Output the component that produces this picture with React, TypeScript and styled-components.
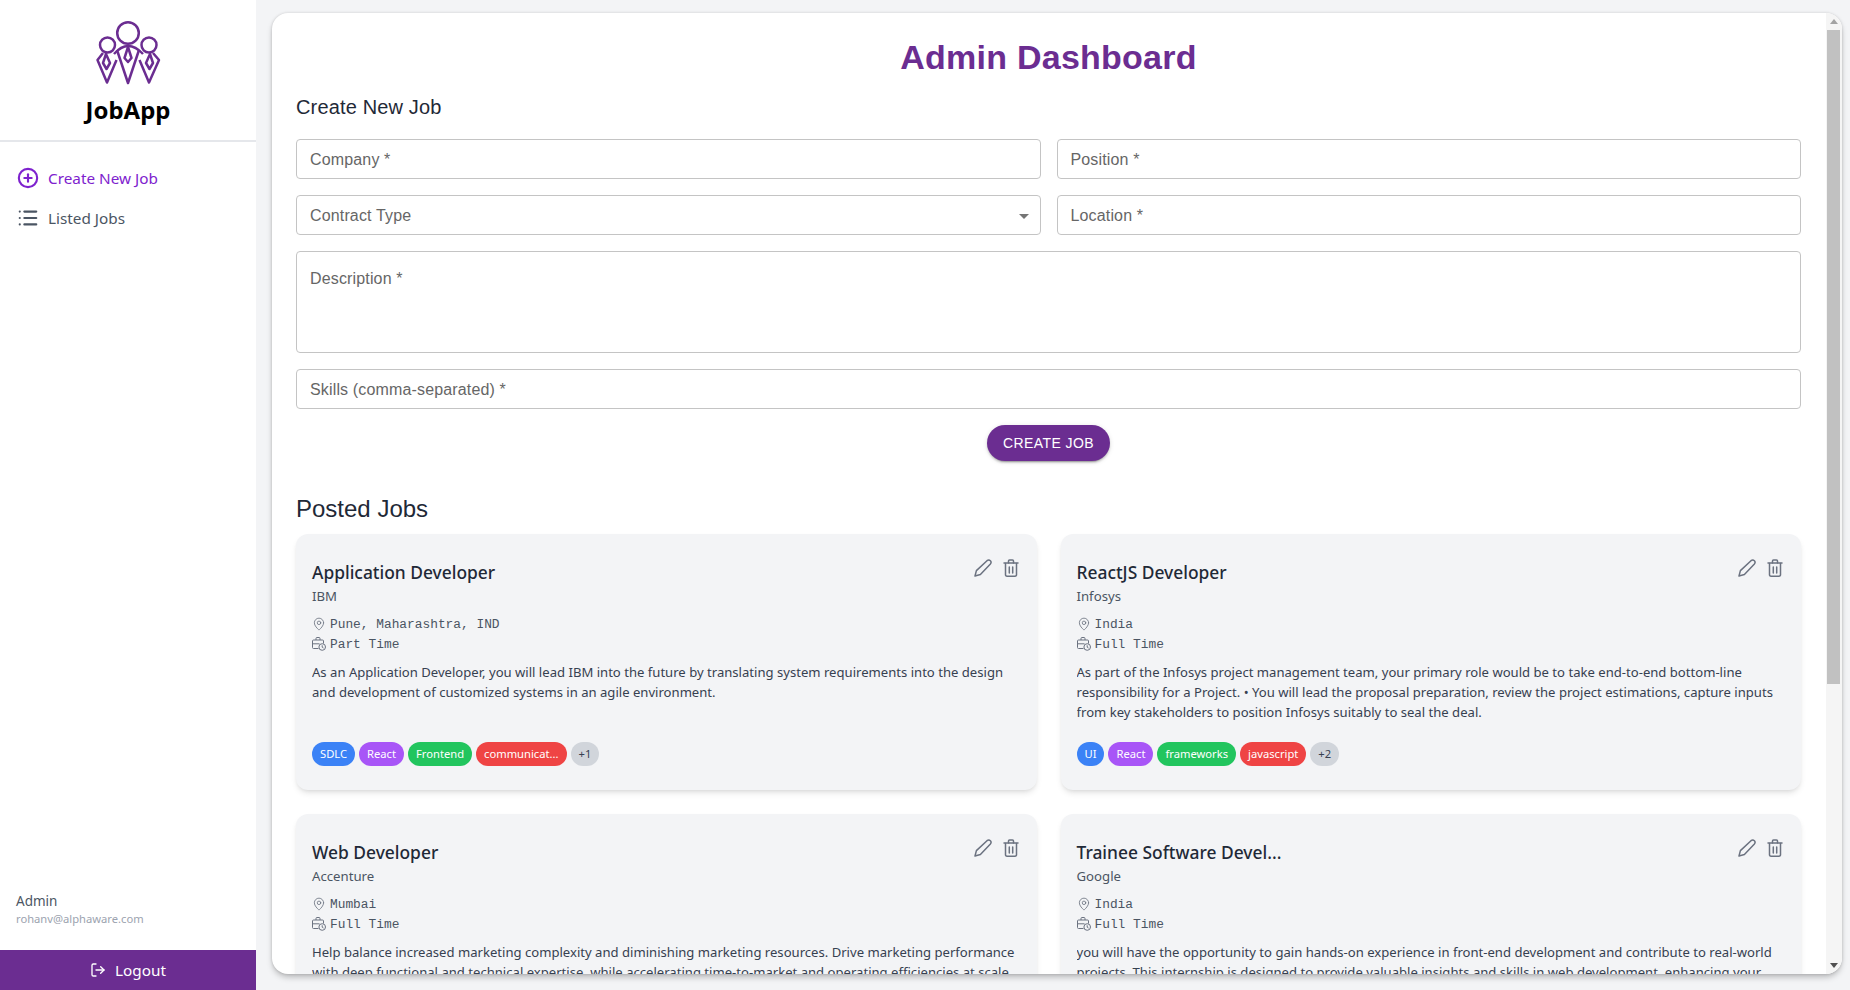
import React from 'react';
import styled, { createGlobalStyle } from 'styled-components';
import { CirclePlus, List, LogOut, MapPin } from 'lucide-react';

const UI_FONT = '"Noto Sans", "Liberation Sans", sans-serif';
const FORM_FONT = '"Liberation Sans", Arial, sans-serif';
const PURPLE = '#6b2d91';

const GlobalStyle = createGlobalStyle`
  * { box-sizing: border-box; }
  html, body { margin: 0; height: 100%; overflow: hidden; }
  body { font-family: ${UI_FONT}; background: #f3f4f6; }
  #root { height: 100%; }
`;

const Layout = styled.div`
  display: flex;
  height: 990px;
  background: #f3f4f6;
`;

const Sidebar = styled.aside`
  width: 256px;
  flex: none;
  display: flex;
  flex-direction: column;
  background: #fff;
`;

const Brand = styled.div`
  height: 142px;
  padding-top: 18px;
  display: flex;
  flex-direction: column;
  align-items: center;
  border-bottom: 2px solid #e5e7eb;
`;

const BrandName = styled.div`
  font-size: 24px;
  line-height: 32px;
  margin-top: 6px;
  font-weight: 700;
  color: #000;
`;

const Nav = styled.nav`
  display: flex;
  flex-direction: column;
  gap: 8px;
  padding: 20px 17px 0;
  flex: 1;
`;

const NavItem = styled.a<{ $active?: boolean }>`
  display: flex;
  align-items: center;
  gap: 9px;
  height: 32px;
  font-size: 15.3px;
  color: ${(p) => (p.$active ? '#7e22ce' : '#4b5563')};
`;

const UserBox = styled.div`
  padding: 0 16px 23px;
`;

const UserName = styled.div`
  font-size: 13.5px;
  line-height: 20px;
  color: #4b5563;
`;

const UserEmail = styled.div`
  font-size: 11.2px;
  line-height: 16px;
  color: #9ca3af;
`;

const LogoutButton = styled.button`
  height: 40px;
  border: 0;
  display: flex;
  align-items: center;
  justify-content: center;
  gap: 9px;
  background: ${PURPLE};
  color: #fff;
  font-family: ${UI_FONT};
  font-size: 15.3px;
`;

const Panel = styled.main`
  width: 1570px;
  height: 961px;
  margin: 13px 0 0 16px;
  display: flex;
  background: #fff;
  border-radius: 16px;
  overflow: hidden;
  box-shadow: 0 4px 6px -1px rgba(0, 0, 0, 0.25), 0 0 3px rgba(0, 0, 0, 0.15);
`;

const PanelBody = styled.div`
  flex: 1;
  min-width: 0;
  padding: 24px 25px 24px 24px;
  overflow: hidden;
`;

const ScrollBar = styled.div`
  width: 16px;
  flex: none;
  display: flex;
  flex-direction: column;
  background: #f5f5f5;
`;

const ScrollArrow = styled.div`
  height: 17px;
  flex: none;
  display: flex;
  align-items: center;
  justify-content: center;
  padding-right: 1px;
`;

const ScrollThumb = styled.div`
  height: 654px;
  margin: 0 2px 0 1px;
  background: #c1c1c1;
`;

const ScrollSpacer = styled.div`
  flex: 1;
`;

const PageTitle = styled.h1`
  margin: 0;
  font: 700 34px/40px ${FORM_FONT};
  letter-spacing: 0.25px;
  color: ${PURPLE};
  text-align: center;
`;

const SectionTitle = styled.h2`
  margin: 16px 0 0;
  height: 46px;
  font: 400 20px/28px ${FORM_FONT};
  letter-spacing: 0.15px;
  color: #1f2937;
`;

const Form = styled.form`
  display: grid;
  grid-template-columns: 1fr 1fr;
  gap: 16px;
`;

const fieldBase = `
  width: 100%;
  border: 1px solid #c4c4c4;
  border-radius: 4px;
  background: #fff;
  outline: none;
  font: 400 16px ${FORM_FONT};
  letter-spacing: 0.15px;
  color: #666;
  &::placeholder { color: #666; opacity: 1; }
`;

const Field = styled.input<{ $wide?: boolean }>`
  ${fieldBase}
  height: 40px;
  padding: 2px 13px 0;
  ${(p) => (p.$wide ? 'grid-column: 1 / -1;' : '')}
`;

const SelectBox = styled.div`
  ${fieldBase}
  height: 40px;
  padding: 2px 10px 0 13px;
  display: flex;
  align-items: center;
  justify-content: space-between;
`;

const Caret = styled.span`
  width: 0;
  height: 0;
  border-left: 5px solid transparent;
  border-right: 5px solid transparent;
  border-top: 5px solid #757575;
  margin-right: 1px;
`;

const Area = styled.textarea`
  ${fieldBase}
  grid-column: 1 / -1;
  height: 102px;
  padding: 18px 13px;
  resize: none;
`;

const FormActions = styled.div`
  grid-column: 1 / -1;
  display: flex;
  justify-content: center;
`;

const CreateButton = styled.button`
  height: 36px;
  padding: 0 16px;
  border: 0;
  border-radius: 18px;
  background: ${PURPLE};
  color: #fff;
  font: 400 14px ${FORM_FONT};
  letter-spacing: 0.4px;
  box-shadow: 0 3px 1px -2px rgba(0, 0, 0, 0.2), 0 2px 2px rgba(0, 0, 0, 0.14), 0 1px 5px rgba(0, 0, 0, 0.12);
`;

const JobsTitle = styled.h2`
  margin: 28px 0 0;
  height: 45px;
  font: 400 24px/40px ${FORM_FONT};
  color: #1f2937;
`;

const CardGrid = styled.div`
  display: grid;
  grid-template-columns: 1fr 1fr;
  gap: 24px;
`;

const Card = styled.article`
  position: relative;
  height: 256px;
  padding: 24px 16px;
  display: flex;
  flex-direction: column;
  background: #f3f4f6;
  border-radius: 12px;
  box-shadow: 0 4px 6px -1px rgba(0, 0, 0, 0.1), 0 2px 4px -2px rgba(0, 0, 0, 0.1);
`;

const CardActions = styled.div`
  position: absolute;
  top: 25px;
  right: 18px;
  display: flex;
  gap: 11px;
  color: #6b7280;
`;

const JobTitle = styled.h3`
  margin: 0;
  font-size: 17.4px;
  line-height: 28px;
  font-weight: 500;
  color: #1f2937;
`;

const Company = styled.div`
  font-size: 13.2px;
  line-height: 20px;
  color: #4b5563;
`;

const MetaRows = styled.div`
  margin-top: 8px;
`;

const MetaRow = styled.div`
  display: flex;
  align-items: center;
  gap: 4px;
  height: 20px;
  font: 400 12.85px "Liberation Mono", monospace;
  color: #4b5563;
`;

const MetaIcon = styled.span`
  width: 14px;
  flex: none;
  display: flex;
  justify-content: center;
  color: #6b7280;
`;

const Description = styled.p`
  margin: 8px 0 0;
  height: 60px;
  font-size: 13.1px;
  line-height: 20px;
  color: #374151;
  overflow: hidden;
`;

const Pills = styled.div`
  margin-top: auto;
  display: flex;
  gap: 4px;
`;

const TONES: Record<string, string> = {
  blue: 'background: #3b82f6; color: #fff;',
  purple: 'background: #a855f7; color: #fff;',
  green: 'background: #22c55e; color: #fff;',
  red: 'background: #ef4444; color: #fff;',
  gray: 'background: #d1d5db; color: #374151;',
};

const Pill = styled.span<{ $tone: string }>`
  height: 24px;
  padding: 0 8px;
  border-radius: 12px;
  font-size: 11.2px;
  line-height: 24px;
  ${(p) => TONES[p.$tone]}
`;

function Logo() {
  return (
    <svg width="66" height="70" viewBox="95 18 66 70" fill="none" stroke={PURPLE} strokeWidth="2.5" strokeLinejoin="round">
      <circle cx="128" cy="33" r="10.8" />
      <circle cx="107.5" cy="45" r="7.5" />
      <circle cx="149" cy="45" r="7.5" />
      <path d="M114 54 Q128 38 143 54" />
      <path d="M117 50 L128 83 L139 50" />
      <path d="M128 47 L124.5 58 L128 62 L131.5 58 Z" />
      <path d="M103 53 L97.5 60 L107 82.5 L116.5 60" />
      <path d="M153 53 L159 60 L149 82.5 L139.5 60" />
      <path d="M106 54 L103 63 L106.5 69 L110 63 Z" />
      <path d="M150 54 L153 63 L149.5 69 L146 63 Z" />
    </svg>
  );
}

function PencilIcon() {
  return (
    <svg width="18" height="18" viewBox="0 0 18 18" fill="none" stroke="currentColor" strokeWidth="1.5" strokeLinejoin="round">
      <path d="M1 17 L2.4 11.6 L13 1.7 Q14.8 0.3 16.4 1.7 Q17.8 3.3 16.4 5 L6.4 15.6 Z" />
    </svg>
  );
}

function TrashIcon() {
  return (
    <svg width="16" height="18" viewBox="0 0 16 18" fill="none" stroke="currentColor" strokeWidth="1.5" strokeLinecap="round">
      <path d="M2.5 4.5 V16 a1.5 1.5 0 0 0 1.5 1.2 H12 a1.5 1.5 0 0 0 1.5 -1.2 V4.5" />
      <path d="M1 4 H15" />
      <path d="M5.5 4 V2 a1 1 0 0 1 1 -1 h3 a1 1 0 0 1 1 1 V4" />
      <path d="M6.3 8 V14" />
      <path d="M9.7 8 V14" />
    </svg>
  );
}

function WorkIcon() {
  return (
    <svg width="14" height="14" viewBox="0 0 14 14" fill="none" stroke="currentColor" strokeWidth="1">
      <path d="M6.5 11.5 H1.5 a1 1 0 0 1 -1 -1 V4 a1 1 0 0 1 1 -1 H10.5 a1 1 0 0 1 1 1 V6.5" />
      <path d="M4 3 V1.5 a1 1 0 0 1 1 -1 H7 a1 1 0 0 1 1 1 V3" />
      <path d="M0.5 6.8 H7.5" />
      <circle cx="10.2" cy="10" r="3.3" />
      <path d="M10.2 8.3 V10.2 L11.5 11" />
    </svg>
  );
}

const skillTones = ['blue', 'purple', 'green', 'red'];

const jobs = [
  {
    title: 'Application Developer',
    company: 'IBM',
    location: 'Pune, Maharashtra, IND',
    type: 'Part Time',
    description:
      'As an Application Developer, you will lead IBM into the future by translating system requirements into the design and development of customized systems in an agile environment.',
    skills: ['SDLC', 'React', 'Frontend', 'communicat...'],
    more: '+1',
  },
  {
    title: 'ReactJS Developer',
    company: 'Infosys',
    location: 'India',
    type: 'Full Time',
    description:
      'As part of the Infosys project management team, your primary role would be to take end-to-end bottom-line responsibility for a Project. • You will lead the proposal preparation, review the project estimations, capture inputs from key stakeholders to position Infosys suitably to seal the deal.',
    skills: ['UI', 'React', 'frameworks', 'javascript'],
    more: '+2',
  },
  {
    title: 'Web Developer',
    company: 'Accenture',
    location: 'Mumbai',
    type: 'Full Time',
    description:
      'Help balance increased marketing complexity and diminishing marketing resources. Drive marketing performance with deep functional and technical expertise, while accelerating time-to-market and operating efficiencies at scale.',
    skills: ['HTML', 'CSS', 'React', 'marketing'],
    more: '+1',
  },
  {
    title: 'Trainee Software Devel...',
    company: 'Google',
    location: 'India',
    type: 'Full Time',
    description:
      'you will have the opportunity to gain hands-on experience in front-end development and contribute to real-world projects. This internship is designed to provide valuable insights and skills in web development, enhancing your career.',
    skills: ['HTML', 'CSS', 'React', 'javascript'],
    more: '+1',
  },
];

export default function App() {
  return (
    <Layout>
      <GlobalStyle />
      <Sidebar>
        <Brand>
          <Logo />
          <BrandName>JobApp</BrandName>
        </Brand>
        <Nav>
          <NavItem $active>
            <CirclePlus size={22} strokeWidth={2.3} />
            Create New Job
          </NavItem>
          <NavItem>
            <List size={22} strokeWidth={2.3} />
            Listed Jobs
          </NavItem>
        </Nav>
        <UserBox>
          <UserName>Admin</UserName>
          <UserEmail>rohanv@alphaware.com</UserEmail>
        </UserBox>
        <LogoutButton>
          <LogOut size={16} />
          Logout
        </LogoutButton>
      </Sidebar>
      <Panel>
        <PanelBody>
          <PageTitle>Admin Dashboard</PageTitle>
          <SectionTitle>Create New Job</SectionTitle>
          <Form>
            <Field placeholder="Company *" />
            <Field placeholder="Position *" />
            <SelectBox>
              Contract Type
              <Caret />
            </SelectBox>
            <Field placeholder="Location *" />
            <Area placeholder="Description *" />
            <Field $wide placeholder="Skills (comma-separated) *" />
            <FormActions>
              <CreateButton type="button">CREATE JOB</CreateButton>
            </FormActions>
          </Form>
          <JobsTitle>Posted Jobs</JobsTitle>
          <CardGrid>
            {jobs.map((job) => (
              <Card key={job.title}>
                <CardActions>
                  <PencilIcon />
                  <TrashIcon />
                </CardActions>
                <JobTitle>{job.title}</JobTitle>
                <Company>{job.company}</Company>
                <MetaRows>
                  <MetaRow>
                    <MetaIcon>
                      <MapPin size={14} strokeWidth={1.4} />
                    </MetaIcon>
                    {job.location}
                  </MetaRow>
                  <MetaRow>
                    <MetaIcon>
                      <WorkIcon />
                    </MetaIcon>
                    {job.type}
                  </MetaRow>
                </MetaRows>
                <Description>{job.description}</Description>
                <Pills>
                  {job.skills.map((skill, i) => (
                    <Pill key={skill} $tone={skillTones[i]}>
                      {skill}
                    </Pill>
                  ))}
                  <Pill $tone="gray">{job.more}</Pill>
                </Pills>
              </Card>
            ))}
          </CardGrid>
        </PanelBody>
        <ScrollBar>
          <ScrollArrow>
            <svg width="8" height="5" viewBox="0 0 8 5">
              <polygon points="4,0 8,5 0,5" fill="#a3a3a3" />
            </svg>
          </ScrollArrow>
          <ScrollThumb />
          <ScrollSpacer />
          <ScrollArrow>
            <svg width="8" height="5" viewBox="0 0 8 5">
              <polygon points="0,0 8,0 4,5" fill="#505050" />
            </svg>
          </ScrollArrow>
        </ScrollBar>
      </Panel>
    </Layout>
  );
}
